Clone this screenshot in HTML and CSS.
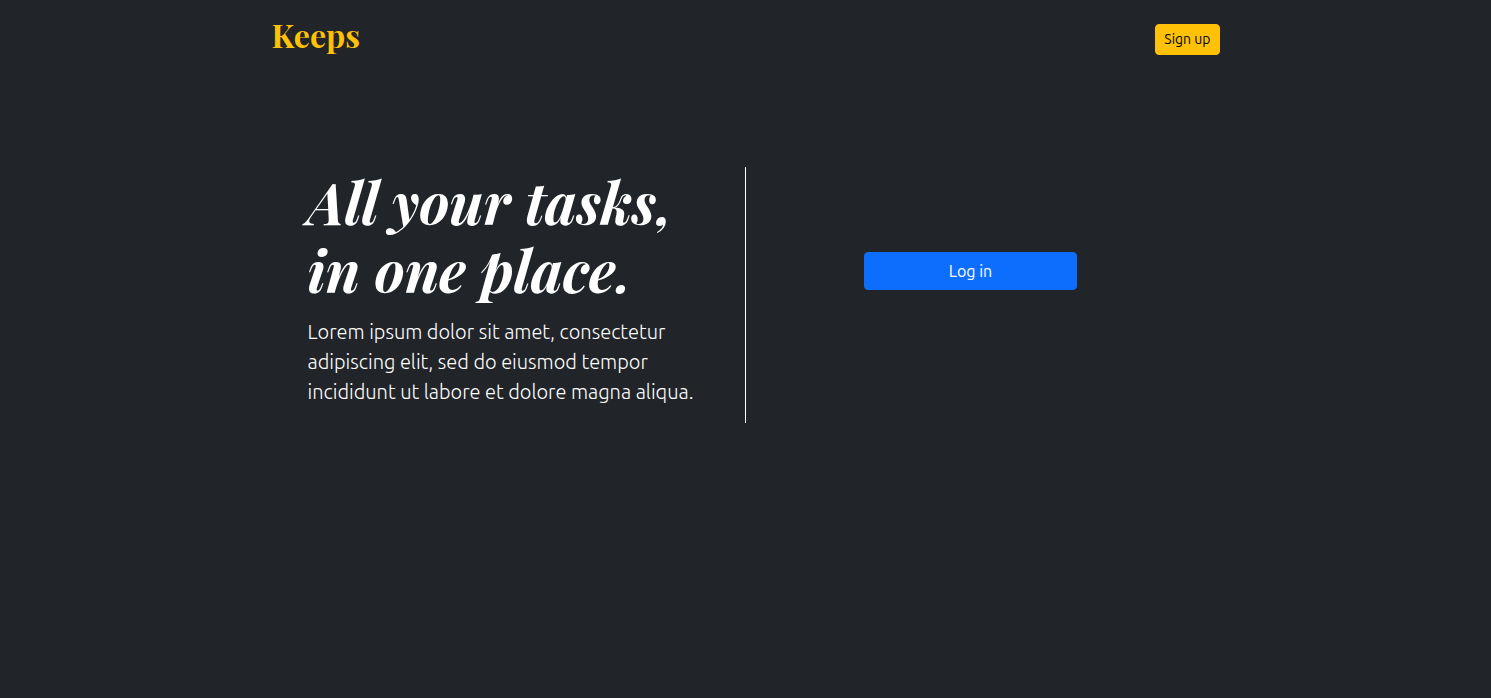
FILE: index.html
```
<!DOCTYPE html>
<html lang="en">
<head>
<meta charset="utf-8">
<meta name="viewport" content="width=device-width, initial-scale=1">
<title>Keeps</title>
<link rel="stylesheet" href="styles.css">
</head>
<body>
<div class="container">
  <header class="header">
    <a class="brand" href="#">Keeps</a>
    <button class="btn btn-signup" type="button">Sign up</button>
  </header>
  <main class="hero">
    <section class="intro">
      <h1 class="headline">All your tasks,<br>in one place.</h1>
      <p class="lead">Lorem ipsum dolor sit amet, consectetur<br>adipiscing elit, sed do eiusmod tempor<br>incididunt ut labore et dolore magna aliqua.</p>
    </section>
    <section class="access">
      <button class="btn btn-login" type="button">Log in</button>
    </section>
  </main>
</div>
</body>
</html>
```

FILE: styles.css
```
* {
  box-sizing: border-box;
}

body {
  margin: 0;
  background: #212529;
  color: #fff;
  font-family: Ubuntu, "Noto Sans", sans-serif;
  font-size: 16px;
  line-height: 24px;
}

.container {
  max-width: 996px;
  margin: 0 auto;
  padding: 0 24px;
}

.header {
  display: flex;
  justify-content: space-between;
  align-items: flex-start;
  padding-top: 16px;
}

.brand {
  color: #ffc107;
  font-family: "Playfair Display", "Liberation Serif", serif;
  font-size: 32px;
  font-weight: 700;
  line-height: 38px;
  text-decoration: none;
}

.btn {
  border: 1px solid transparent;
  border-radius: 4px;
  font-family: inherit;
  cursor: pointer;
}

.btn-signup {
  margin-top: 8px;
  padding: 4px 8px;
  border-color: #ffc107;
  background: #ffc107;
  color: #000;
  font-size: 14px;
  line-height: 21px;
}

.hero {
  display: grid;
  grid-template-columns: 1fr 1fr;
  margin-top: 112px;
}

.intro {
  padding: 0 0 16px 36px;
  border-right: 1px solid #fff;
  white-space: nowrap;
}

.headline {
  margin: 0 0 14px;
  font-family: "Playfair Display", "Liberation Serif", serif;
  font-size: 57px;
  font-style: italic;
  font-weight: 700;
  line-height: 68px;
}

.lead {
  margin: 0;
  font-size: 20px;
  font-weight: 300;
  line-height: 30px;
}

.access {
  margin-right: 24px;
  padding: 85px 12px 0;
}

.btn-login {
  display: block;
  width: 50%;
  margin: 0 auto;
  padding: 6px 12px;
  border-color: #0d6efd;
  background: #0d6efd;
  color: #fff;
  font-size: 16px;
  line-height: 24px;
}
```
